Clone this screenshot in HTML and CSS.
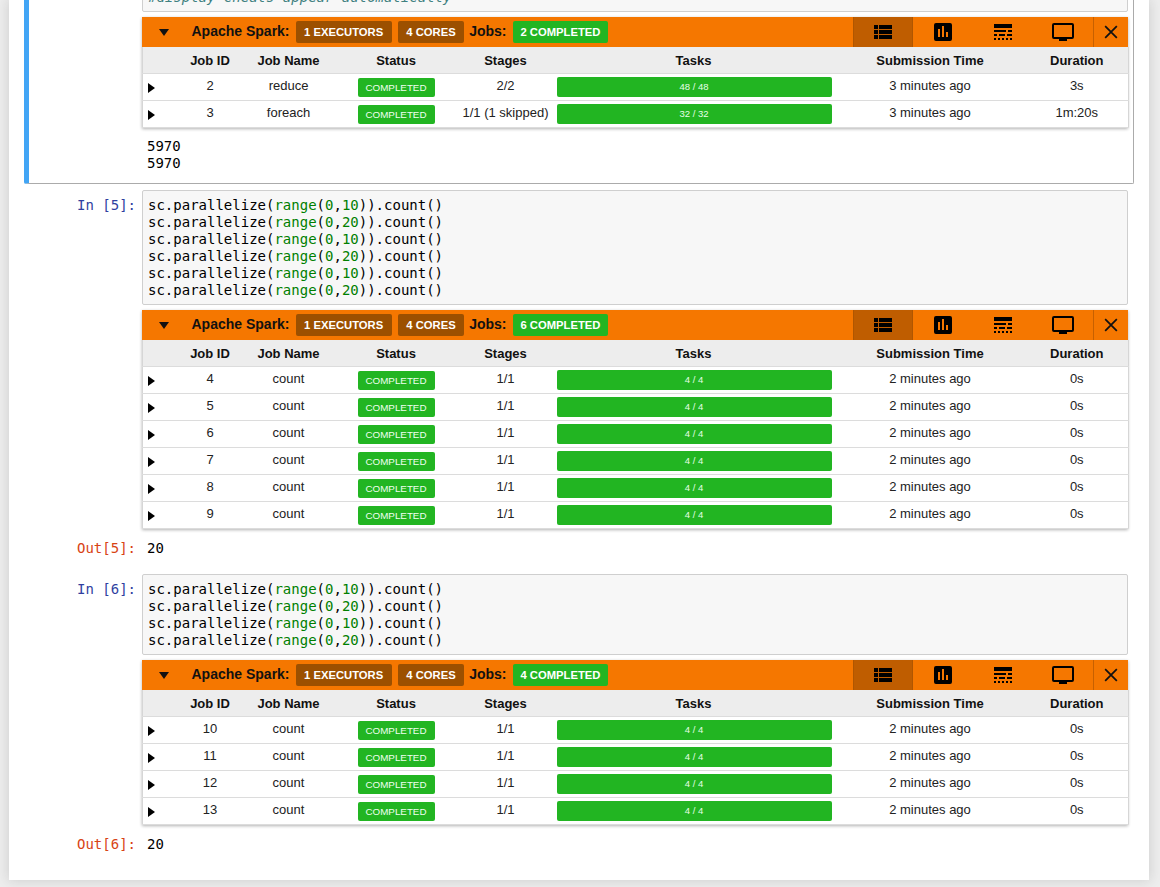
FILE: index.html
```html
<!DOCTYPE html>
<html lang="en">
<head>
<meta charset="utf-8">
<title>Notebook</title>
<link rel="stylesheet" href="styles.css">
</head>
<body>
<main class="notebook">
  <section class="cell selected">
    <div class="row"><div class="prompt"></div>
      <div class="main"><pre class="input clipped"><span class="c">#display cheats appear automatically</span></pre>
        <div class="widget">
          <div class="bar-head">
            <span class="caret"></span><b class="title">Apache Spark:</b><span class="chip dark">1 EXECUTORS</span><span class="chip dark">4 CORES</span><b class="jobs">Jobs:</b><span class="chip ok">2 COMPLETED</span>
            <span class="tabs">
              <span class="tab active"><svg viewBox="0 0 18 14" class="ic-list"><path d="M0 0h4v4H0zM5 0h13v4H5zM0 5h4v4H0zM5 5h13v4H5zM0 10h4v4H0zM5 10h13v4H5z"/></svg></span>
              <span class="tab"><svg viewBox="0 0 18 18" class="ic-chart"><path fill-rule="evenodd" d="M2 0h14a2 2 0 0 1 2 2v14a2 2 0 0 1-2 2H2a2 2 0 0 1-2-2V2a2 2 0 0 1 2-2zM4 6v8h2V6zM8 3v11h2V3zM12 9v5h2V9z"/></svg></span>
              <span class="tab"><svg viewBox="0 0 18 16" class="ic-time"><path d="M0 0h18v4H0zM0 6h12v2H0zM14 6h4v2h-4zM0 10h3v2H0zM5 10h6v2H5zM13 10h5v2h-5zM0 14h2v2H0zM4 14h2v2H4zM8 14h2v2H8zM12 14h2v2h-2zM16 14h2v2h-2z"/></svg></span>
              <span class="tab"><svg viewBox="0 0 22 18" class="ic-mon"><path fill-rule="evenodd" d="M2 0h18a2 2 0 0 1 2 2v12a2 2 0 0 1-2 2h-5v2H7v-2H2a2 2 0 0 1-2-2V2a2 2 0 0 1 2-2zM2 2v12h18V2z"/></svg></span>
              <span class="tab close"><svg viewBox="0 0 12 12" class="ic-x"><path d="M1 1l10 10M11 1L1 11"/></svg></span>
            </span>
          </div>
          <table class="jobs-table">
            <colgroup><col class="w-a"><col class="w-b"><col class="w-c"><col class="w-d"><col class="w-e"><col class="w-f"><col class="w-g"><col class="w-h"></colgroup>
            <thead><tr><th></th><th>Job ID</th><th>Job Name</th><th>Status</th><th>Stages</th><th>Tasks</th><th>Submission Time</th><th>Duration</th></tr></thead>
            <tbody>
              <tr><td class="arrow"><i></i></td><td>2</td><td>reduce</td><td><span class="status">COMPLETED</span></td><td>2/2</td><td class="task"><div class="progress">48 / 48</div></td><td>3 minutes ago</td><td>3s</td></tr>
              <tr><td class="arrow"><i></i></td><td>3</td><td>foreach</td><td><span class="status">COMPLETED</span></td><td>1/1 (1 skipped)</td><td class="task"><div class="progress">32 / 32</div></td><td>3 minutes ago</td><td>1m:20s</td></tr>
            </tbody>
          </table>
        </div>
        <pre class="output stream">5970
5970</pre>
      </div>
    </div>
  </section>

  <section class="cell">
    <div class="row"><div class="prompt in">In [5]:</div>
      <div class="main"><pre class="input">sc.parallelize(<span class="b">range</span>(<span class="n">0</span>,<span class="n">10</span>)).count()
sc.parallelize(<span class="b">range</span>(<span class="n">0</span>,<span class="n">20</span>)).count()
sc.parallelize(<span class="b">range</span>(<span class="n">0</span>,<span class="n">10</span>)).count()
sc.parallelize(<span class="b">range</span>(<span class="n">0</span>,<span class="n">20</span>)).count()
sc.parallelize(<span class="b">range</span>(<span class="n">0</span>,<span class="n">10</span>)).count()
sc.parallelize(<span class="b">range</span>(<span class="n">0</span>,<span class="n">20</span>)).count()</pre>
        <div class="widget">
          <div class="bar-head">
            <span class="caret"></span><b class="title">Apache Spark:</b><span class="chip dark">1 EXECUTORS</span><span class="chip dark">4 CORES</span><b class="jobs">Jobs:</b><span class="chip ok">6 COMPLETED</span>
            <span class="tabs">
              <span class="tab active"><svg viewBox="0 0 18 14" class="ic-list"><path d="M0 0h4v4H0zM5 0h13v4H5zM0 5h4v4H0zM5 5h13v4H5zM0 10h4v4H0zM5 10h13v4H5z"/></svg></span>
              <span class="tab"><svg viewBox="0 0 18 18" class="ic-chart"><path fill-rule="evenodd" d="M2 0h14a2 2 0 0 1 2 2v14a2 2 0 0 1-2 2H2a2 2 0 0 1-2-2V2a2 2 0 0 1 2-2zM4 6v8h2V6zM8 3v11h2V3zM12 9v5h2V9z"/></svg></span>
              <span class="tab"><svg viewBox="0 0 18 16" class="ic-time"><path d="M0 0h18v4H0zM0 6h12v2H0zM14 6h4v2h-4zM0 10h3v2H0zM5 10h6v2H5zM13 10h5v2h-5zM0 14h2v2H0zM4 14h2v2H4zM8 14h2v2H8zM12 14h2v2h-2zM16 14h2v2h-2z"/></svg></span>
              <span class="tab"><svg viewBox="0 0 22 18" class="ic-mon"><path fill-rule="evenodd" d="M2 0h18a2 2 0 0 1 2 2v12a2 2 0 0 1-2 2h-5v2H7v-2H2a2 2 0 0 1-2-2V2a2 2 0 0 1 2-2zM2 2v12h18V2z"/></svg></span>
              <span class="tab close"><svg viewBox="0 0 12 12" class="ic-x"><path d="M1 1l10 10M11 1L1 11"/></svg></span>
            </span>
          </div>
          <table class="jobs-table">
            <colgroup><col class="w-a"><col class="w-b"><col class="w-c"><col class="w-d"><col class="w-e"><col class="w-f"><col class="w-g"><col class="w-h"></colgroup>
            <thead><tr><th></th><th>Job ID</th><th>Job Name</th><th>Status</th><th>Stages</th><th>Tasks</th><th>Submission Time</th><th>Duration</th></tr></thead>
            <tbody>
              <tr><td class="arrow"><i></i></td><td>4</td><td>count</td><td><span class="status">COMPLETED</span></td><td>1/1</td><td class="task"><div class="progress">4 / 4</div></td><td>2 minutes ago</td><td>0s</td></tr>
              <tr><td class="arrow"><i></i></td><td>5</td><td>count</td><td><span class="status">COMPLETED</span></td><td>1/1</td><td class="task"><div class="progress">4 / 4</div></td><td>2 minutes ago</td><td>0s</td></tr>
              <tr><td class="arrow"><i></i></td><td>6</td><td>count</td><td><span class="status">COMPLETED</span></td><td>1/1</td><td class="task"><div class="progress">4 / 4</div></td><td>2 minutes ago</td><td>0s</td></tr>
              <tr><td class="arrow"><i></i></td><td>7</td><td>count</td><td><span class="status">COMPLETED</span></td><td>1/1</td><td class="task"><div class="progress">4 / 4</div></td><td>2 minutes ago</td><td>0s</td></tr>
              <tr><td class="arrow"><i></i></td><td>8</td><td>count</td><td><span class="status">COMPLETED</span></td><td>1/1</td><td class="task"><div class="progress">4 / 4</div></td><td>2 minutes ago</td><td>0s</td></tr>
              <tr><td class="arrow"><i></i></td><td>9</td><td>count</td><td><span class="status">COMPLETED</span></td><td>1/1</td><td class="task"><div class="progress">4 / 4</div></td><td>2 minutes ago</td><td>0s</td></tr>
            </tbody>
          </table>
        </div>
      </div>
    </div>
    <div class="row out-row"><div class="prompt out">Out[5]:</div><pre class="output">20</pre></div>
  </section>

  <section class="cell">
    <div class="row"><div class="prompt in">In [6]:</div>
      <div class="main"><pre class="input">sc.parallelize(<span class="b">range</span>(<span class="n">0</span>,<span class="n">10</span>)).count()
sc.parallelize(<span class="b">range</span>(<span class="n">0</span>,<span class="n">20</span>)).count()
sc.parallelize(<span class="b">range</span>(<span class="n">0</span>,<span class="n">10</span>)).count()
sc.parallelize(<span class="b">range</span>(<span class="n">0</span>,<span class="n">20</span>)).count()</pre>
        <div class="widget">
          <div class="bar-head">
            <span class="caret"></span><b class="title">Apache Spark:</b><span class="chip dark">1 EXECUTORS</span><span class="chip dark">4 CORES</span><b class="jobs">Jobs:</b><span class="chip ok">4 COMPLETED</span>
            <span class="tabs">
              <span class="tab active"><svg viewBox="0 0 18 14" class="ic-list"><path d="M0 0h4v4H0zM5 0h13v4H5zM0 5h4v4H0zM5 5h13v4H5zM0 10h4v4H0zM5 10h13v4H5z"/></svg></span>
              <span class="tab"><svg viewBox="0 0 18 18" class="ic-chart"><path fill-rule="evenodd" d="M2 0h14a2 2 0 0 1 2 2v14a2 2 0 0 1-2 2H2a2 2 0 0 1-2-2V2a2 2 0 0 1 2-2zM4 6v8h2V6zM8 3v11h2V3zM12 9v5h2V9z"/></svg></span>
              <span class="tab"><svg viewBox="0 0 18 16" class="ic-time"><path d="M0 0h18v4H0zM0 6h12v2H0zM14 6h4v2h-4zM0 10h3v2H0zM5 10h6v2H5zM13 10h5v2h-5zM0 14h2v2H0zM4 14h2v2H4zM8 14h2v2H8zM12 14h2v2h-2zM16 14h2v2h-2z"/></svg></span>
              <span class="tab"><svg viewBox="0 0 22 18" class="ic-mon"><path fill-rule="evenodd" d="M2 0h18a2 2 0 0 1 2 2v12a2 2 0 0 1-2 2h-5v2H7v-2H2a2 2 0 0 1-2-2V2a2 2 0 0 1 2-2zM2 2v12h18V2z"/></svg></span>
              <span class="tab close"><svg viewBox="0 0 12 12" class="ic-x"><path d="M1 1l10 10M11 1L1 11"/></svg></span>
            </span>
          </div>
          <table class="jobs-table">
            <colgroup><col class="w-a"><col class="w-b"><col class="w-c"><col class="w-d"><col class="w-e"><col class="w-f"><col class="w-g"><col class="w-h"></colgroup>
            <thead><tr><th></th><th>Job ID</th><th>Job Name</th><th>Status</th><th>Stages</th><th>Tasks</th><th>Submission Time</th><th>Duration</th></tr></thead>
            <tbody>
              <tr><td class="arrow"><i></i></td><td>10</td><td>count</td><td><span class="status">COMPLETED</span></td><td>1/1</td><td class="task"><div class="progress">4 / 4</div></td><td>2 minutes ago</td><td>0s</td></tr>
              <tr><td class="arrow"><i></i></td><td>11</td><td>count</td><td><span class="status">COMPLETED</span></td><td>1/1</td><td class="task"><div class="progress">4 / 4</div></td><td>2 minutes ago</td><td>0s</td></tr>
              <tr><td class="arrow"><i></i></td><td>12</td><td>count</td><td><span class="status">COMPLETED</span></td><td>1/1</td><td class="task"><div class="progress">4 / 4</div></td><td>2 minutes ago</td><td>0s</td></tr>
              <tr><td class="arrow"><i></i></td><td>13</td><td>count</td><td><span class="status">COMPLETED</span></td><td>1/1</td><td class="task"><div class="progress">4 / 4</div></td><td>2 minutes ago</td><td>0s</td></tr>
            </tbody>
          </table>
        </div>
      </div>
    </div>
    <div class="row out-row"><div class="prompt out">Out[6]:</div><pre class="output">20</pre></div>
  </section>
</main>
</body>
</html>
```
FILE: styles.css
```css
html, body { margin: 0; padding: 0; height: 887px; overflow: hidden; background: #eeeeee; }
body { font-family: "Liberation Sans", Arial, sans-serif; font-size: 13px; color: #000; }
pre { margin: 0; font-family: "DejaVu Sans Mono", monospace; font-size: 14px; line-height: 17px; }
.notebook { width: 1140px; height: 880px; margin: 0 9px; padding: 0 15px; box-sizing: border-box; background: #fff; box-shadow: 0 0 12px 1px rgba(87,87,87,.2); overflow: hidden; }
.cell { width: 1110px; box-sizing: border-box; padding: 5px 5px 5px 6px; border: 1px solid transparent; border-radius: 2px; }
.cell.selected { margin-top: -24px; border-color: #ababab; border-left: 5px solid #42a5f5; padding-left: 2px; height: 208px; border-top-color: transparent; }
.row { display: flex; }
.prompt { width: 105px; margin-right: 6px; box-sizing: border-box; flex: none; font-family: "DejaVu Sans Mono", monospace; font-size: 14px; line-height: 17px; text-align: right; padding-top: 7px; }
.in { color: #303f9f; }
.out { color: #d84315; padding-top: 5px; }
.main { width: 986px; flex: none; }
.input { border: 1px solid #cfcfcf; border-radius: 2px; background: #f7f7f7; padding: 6px 5px 5px; color: #000; }
.input.clipped { height: 17px; }
.c { color: #408080; font-style: italic; }
.b { color: #008000; }
.n { color: #008000; }
.widget { margin-top: 5px; box-shadow: 0 1px 3px rgba(0,0,0,.3); background: #fff; }
.bar-head { height: 30px; background: #f57700; display: flex; align-items: center; }
.caret { width: 0; height: 0; margin: 0 0 0 17px; border-left: 5px solid transparent; border-right: 5px solid transparent; border-top: 7px solid #111; flex: none; }
.title { margin: 0 0 0 22.5px; font-size: 14px; color: #111; position: relative; top: -1px; }
.jobs { font-size: 14px; color: #111; margin: 0 7px 0 5px; position: relative; top: -1px; }
.chip { height: 22px; line-height: 22px; font-size: 11.25px; font-weight: bold; color: #fff; border-radius: 2px; padding: 0 8.5px; flex: none; white-space: nowrap; margin-left: 6px; }
.dark { background: #9c5000; }
.ok { background: #22b522; margin-left: 0; padding: 0 7px; }
.tabs { margin-left: auto; display: flex; height: 30px; }
.tab { width: 60px; height: 30px; display: flex; align-items: center; justify-content: center; box-sizing: border-box; }
.tab.active { background: #bf5d00; border: 1px solid #b05600; border-width: 0 1px; }
.tab.close { width: 35px; border-left: 1px solid #c76000; }
.ic-list { width: 18px; height: 14px; fill: #000; }
.ic-chart { width: 18px; height: 18px; fill: #000; }
.ic-time { width: 18px; height: 16px; fill: #000; }
.ic-mon { width: 22px; height: 18px; fill: #000; }
.ic-x { width: 14px; height: 14px; stroke: #111; stroke-width: 1.5; fill: none; }
.jobs-table { width: 986px; table-layout: fixed; border-collapse: collapse; border-left: 1px solid #d6d6d6; border-right: 1px solid #d6d6d6; color: #222; }
.w-a { width: 34px; } .w-b { width: 67px; } .w-c { width: 90px; } .w-d { width: 125px; } .w-e { width: 94px; } .w-f { width: 282px; } .w-g { width: 191px; } .w-h { width: 103px; }
.jobs-table th { height: 26px; padding: 0; background: #ededed; border-bottom: 1px solid #dcdcdc; font-weight: bold; color: #111; text-align: center; font-size: 13px; }
.jobs-table td { padding: 0 0 3px; height: 23px; border-bottom: 1px solid #dcdcdc; text-align: center; font-size: 13px; }
.arrow { text-align: left !important; }
.arrow i { display: block; width: 0; height: 0; margin: 4px 0 0 5px; border-top: 5px solid transparent; border-bottom: 5px solid transparent; border-left: 7px solid #000; }
.status { display: block; width: 77px; height: 19px; margin: 4px auto 0; line-height: 20px; background: #22b522; color: #f0fff0; border-radius: 2px; font-size: 9.8px; }
.task { padding: 0 3px 3px 4px !important; }
.progress { height: 20px; line-height: 20px; background: #22b522; color: #e6ffe6; border-radius: 2px; font-size: 9.5px; margin-top: 3px; }
.stream { padding: 10px 0 0 5px; }
.out-row { margin-top: 6px; height: 27px; }
.out-row .output { padding: 5px 0 0 5px; }
```
